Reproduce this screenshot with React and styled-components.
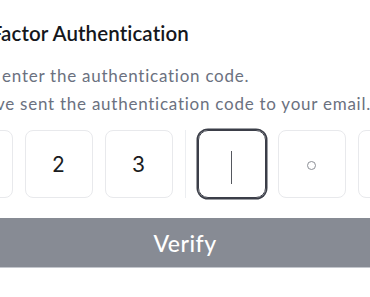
import React from 'react';
import styled, { createGlobalStyle } from 'styled-components';

const GlobalStyle = createGlobalStyle`
    * { box-sizing: border-box; }
    html, body { margin: 0; padding: 0; background: #ffffff; }
    body {
        font-family: 'Lato', 'Noto Sans', sans-serif;
        overflow: hidden;
    }
    #root { width: 100%; }
`;

const Page = styled.main`
    width: 100%;
    height: 297px;
    display: flex;
    justify-content: center;
    padding-top: 21px;
`;

const Card = styled.section`
    flex: 0 0 481px;
    width: 481px;
    display: flex;
    flex-direction: column;
`;

const Title = styled.h1`
    margin: 0;
    font-size: 20.5px;
    font-weight: 600;
    color: #15171c;
    line-height: 24px;
    letter-spacing: 0.1px;
`;

const Subtitle = styled.p`
    margin: 17px 0 0;
    font-size: 17px;
    line-height: 28px;
    color: #6b7180;
    letter-spacing: 0.75px;
    white-space: nowrap;
`;

const CodeRow = styled.div`
    display: flex;
    align-items: center;
    gap: 12px;
    margin-top: 12px;
`;

const Digit = styled.div`
    width: 68px;
    height: 68px;
    flex: 0 0 68px;
    border: 1px solid ${p => (p.$active ? '#3b3e48' : '#e8e9ec')};
    box-shadow: ${p => (p.$active ? '0 0 0 1.5px #3b3e48' : 'none')};
    border-radius: ${p => (p.$active ? '10px' : '8px')};
    display: flex;
    align-items: center;
    justify-content: center;
    font-family: 'Inter', 'Liberation Sans', sans-serif;
    font-size: 21px;
    color: #1a1c21;
`;

const Caret = styled.span`
    width: 1px;
    height: 33px;
    background: #55585f;
    margin-top: 6px;
`;

const Placeholder = styled.span`
    width: 9px;
    height: 9px;
    border: 1.2px solid #8c8f96;
    border-radius: 50%;
    margin-top: 2px;
`;

const Divider = styled.span`
    width: 1px;
    height: 68px;
    background: #eceef1;
`;

const VerifyButton = styled.button`
    margin-top: 20px;
    height: 50px;
    width: 100%;
    border: none;
    border-bottom: 1px solid #c4c7cd;
    background: #878b94;
    color: #ffffff;
    font-family: 'Lato', 'Noto Sans', sans-serif;
    font-size: 23px;
    font-weight: 500;
    letter-spacing: 0.5px;
    cursor: pointer;
`;

const code = ['1', '2', '3', '', '', ''];

export default function App() {
    return (
        <>
            <GlobalStyle />
            <Page>
                <Card>
                    <Title>Two-Factor Authentication</Title>
                    <Subtitle>
                        Please enter the authentication code.<br />
                        We have sent the authentication code to your email.
                    </Subtitle>
                    <CodeRow>
                        {code.slice(0, 3).map((d, i) => (
                            <Digit key={i}>{d}</Digit>
                        ))}
                        <Divider />
                        <Digit $active><Caret /></Digit>
                        <Digit><Placeholder /></Digit>
                        <Digit><Placeholder /></Digit>
                    </CodeRow>
                    <VerifyButton>Verify</VerifyButton>
                </Card>
            </Page>
        </>
    );
}
